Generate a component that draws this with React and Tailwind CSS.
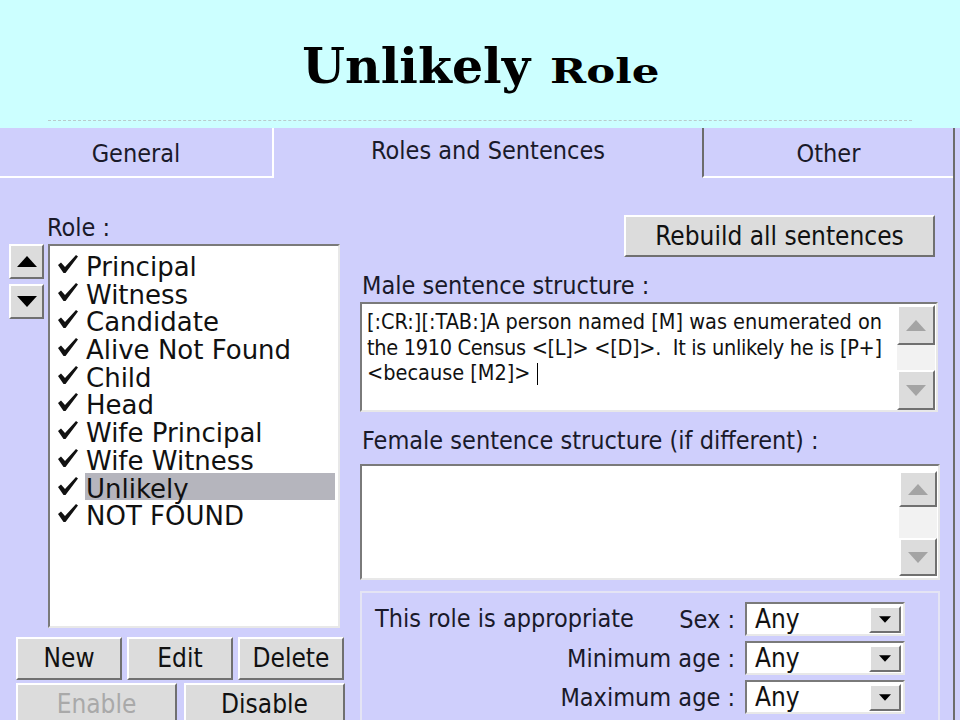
import React from 'react';

const UI = "font-['DejaVu_Sans_Condensed','DejaVu_Sans',sans-serif]";
const LIST = "font-['DejaVu_Sans','Verdana',sans-serif]";

const ROLES = [
    'Principal',
    'Witness',
    'Candidate',
    'Alive Not Found',
    'Child',
    'Head',
    'Wife Principal',
    'Wife Witness',
    'Unlikely',
    'NOT FOUND',
];

// raised win9x style bevel
const BEVEL = 'bg-[#dcdcdc] border-2 border-t-white border-l-white border-b-[#707070] border-r-[#707070]';
const SUNKEN = 'border-2 border-t-[#7a7a7a] border-l-[#7a7a7a] border-b-[#e8e8e8] border-r-[#e8e8e8]';

function Check() {
    return (
        <svg width="22" height="20" viewBox="0 0 22 20" className="shrink-0">
            <path d="M1 11 L4 8.5 L8 13 L19 1 L21 2.5 L8.5 19 L6.5 19 Z" fill="#111" />
        </svg>
    );
}

function Tri({ up, color = '#000', w = 20, h = 11 }) {
    return (
        <svg width={w} height={h} viewBox="0 0 20 11">
            {up ? <path d="M0 11 L10 0 L20 11 Z" fill={color} /> : <path d="M0 0 L20 0 L10 11 Z" fill={color} />}
        </svg>
    );
}

function Button({ children, className = '', disabled }) {
    return (
        <div className={`${BEVEL} flex items-center justify-center text-[26px] ${disabled ? 'text-[#a9a9a9]' : 'text-[#111]'} ${className}`}>
            {children}
        </div>
    );
}

function ScrollBar({ upH, downH, gap }) {
    return (
        <div className="flex flex-col w-[38px] shrink-0 bg-[#f2f2f2]">
            <div className={`${BEVEL} flex items-center justify-center`} style={{ height: upH }}>
                <Tri up color="#a4a4a4" w={22} h={11} />
            </div>
            <div style={{ height: gap }} />
            <div className={`${BEVEL} flex items-center justify-center`} style={{ height: downH }}>
                <Tri color="#a4a4a4" w={22} h={11} />
            </div>
        </div>
    );
}

function Combo() {
    return (
        <div className={`${SUNKEN} w-[160px] h-[34px] shrink-0 bg-white flex items-center justify-between pl-[8px] pr-[2px]`}>
            <span className="text-[26px] text-[#111] leading-none">Any</span>
            <div className={`${BEVEL} w-[32px] h-[27px] flex items-center justify-center`}>
                <Tri w={12} h={7} />
            </div>
        </div>
    );
}

export default function App() {
    return (
        <div className={`w-[960px] h-[720px] overflow-hidden bg-[#cfcffc] ${UI}`}>
            {/* slide header */}
            <div className="h-[128px] shrink-0 bg-[#ccffff] flex flex-col">
                <div className="flex-1 flex items-end justify-center pb-[29px] pr-[22px] font-['DejaVu_Serif',serif] font-bold text-black">
                    <div className="flex items-baseline">
                        <span className="text-[49px] leading-none">Unlikely</span>
                        <span className="inline-block text-[34px] leading-none ml-[20px] scale-x-[1.28] origin-left">Role</span>
                    </div>
                </div>
                <div className="mx-[48px] mb-[7px] border-t border-dashed border-[#b9cccc]" />
            </div>

            {/* dialog */}
            <div className="w-[955px] h-[592px] border-r-2 border-[#6c6c6c] flex flex-col">
                <div className="h-[50px] shrink-0 flex text-[25px] text-[#1a1a2a]">
                    <div className="w-[274px] border-r-2 border-b-2 border-white flex items-center justify-center pt-[3px]">General</div>
                    <div className="w-[428px] flex items-center justify-center pb-[5px]">Roles and Sentences</div>
                    <div className="flex-1 border-l-2 border-l-[#6c6c6c] border-b-2 border-b-white flex items-center justify-center pt-[3px]">Other</div>
                </div>

                <div className="flex-1 min-h-0 flex">
                    {/* left column */}
                    <div className="w-[360px] shrink-0 flex flex-col">
                        <div className="pl-[47px] mt-[36px] h-[28px] leading-[28px] text-[25px] text-[#1a1a2a]">Role :</div>
                        <div className="flex mt-[2px] shrink-0">
                            <div className="w-[48px] pl-[9px] flex flex-col gap-[5px]">
                                <div className={`${BEVEL} w-[35px] h-[35px] flex items-center justify-center`}><Tri up /></div>
                                <div className={`${BEVEL} w-[35px] h-[35px] flex items-center justify-center`}><Tri /></div>
                            </div>
                            <div className={`${SUNKEN} w-[292px] h-[384px] bg-white pt-[5px] pl-[7px] pr-[3px] ${LIST}`}>
                                {ROLES.map((r) => (
                                    <div key={r} className="h-[27.7px] flex items-start gap-[6px]">
                                        <div className="pt-[3px]"><Check /></div>
                                        <div className={`flex-1 h-full text-[26px] leading-[27px] pt-[3px] pl-[1px] text-[#111] ${r === 'Unlikely' ? 'bg-[#b5b5bd]' : ''}`}>
                                            {r}
                                        </div>
                                    </div>
                                ))}
                            </div>
                        </div>
                        <div className="flex gap-[5px] pl-[16px] mt-[9px] shrink-0">
                            <Button className="w-[106px] h-[43px]">New</Button>
                            <Button className="w-[106px] h-[43px]">Edit</Button>
                            <Button className="w-[106px] h-[43px]">Delete</Button>
                        </div>
                        <div className="flex gap-[7px] pl-[16px] mt-[3px] shrink-0">
                            <Button disabled className="w-[161px] h-[43px]">Enable</Button>
                            <Button className="w-[161px] h-[43px]">Disable</Button>
                        </div>
                    </div>

                    {/* right column */}
                    <div className="w-[580px] shrink-0 flex flex-col text-[#1a1a2a]">
                        <div className="flex justify-end pr-[5px] mt-[37px] shrink-0">
                            <Button className="w-[311px] h-[42px]">Rebuild all sentences</Button>
                        </div>
                        <div className="mt-[15px] pl-[2px] h-[28px] shrink-0 leading-[28px] text-[25px]">Male sentence structure :</div>
                        <div className={`${SUNKEN} mt-[2px] w-[578px] h-[110px] shrink-0 bg-white flex`}>
                            <div className="flex-1 pl-[5px] pt-[5px] text-[21.5px] leading-[25.5px] text-[#111] whitespace-nowrap">
                                <div>[:CR:][:TAB:]A person named [M] was enumerated on</div>
                                <div className="tracking-[-0.3px]">the 1910 Census &lt;[L]&gt; &lt;[D]&gt;.&nbsp; It is unlikely he is [P+]</div>
                                <div>&lt;because [M2]&gt; <span className="inline-block w-[1.5px] h-[22px] bg-black align-middle" /></div>
                            </div>
                            <div className="pt-[1px] pr-[1px]">
                                <ScrollBar upH={40} downH={40} gap={25} />
                            </div>
                        </div>
                        <div className="mt-[15px] pl-[2px] h-[28px] shrink-0 leading-[28px] text-[25px]">Female sentence structure (if different) :</div>
                        <div className={`${SUNKEN} mt-[9px] w-[580px] h-[116px] shrink-0 bg-white flex justify-end`}>
                            <div className="pt-[5px] pr-[1px]">
                                <ScrollBar upH={36} downH={38} gap={31} />
                            </div>
                        </div>
                        <div className="mt-[11px] w-[580px] flex-1 border-2 border-[#e4e4f4] border-b-0 pt-[9px] pl-[13px] pr-[33px] flex flex-col gap-[5px] text-[25px] leading-none">
                            <div className="flex items-center">
                                <span className="flex-1 -mt-[1px]">This role is appropriate</span>
                                <span className="mr-[10px]">Sex :</span>
                                <Combo />
                            </div>
                            <div className="flex items-center justify-end">
                                <span className="mr-[10px]">Minimum age :</span>
                                <Combo />
                            </div>
                            <div className="flex items-center justify-end">
                                <span className="mr-[10px]">Maximum age :</span>
                                <Combo />
                            </div>
                        </div>
                    </div>
                </div>
            </div>
        </div>
    );
}
